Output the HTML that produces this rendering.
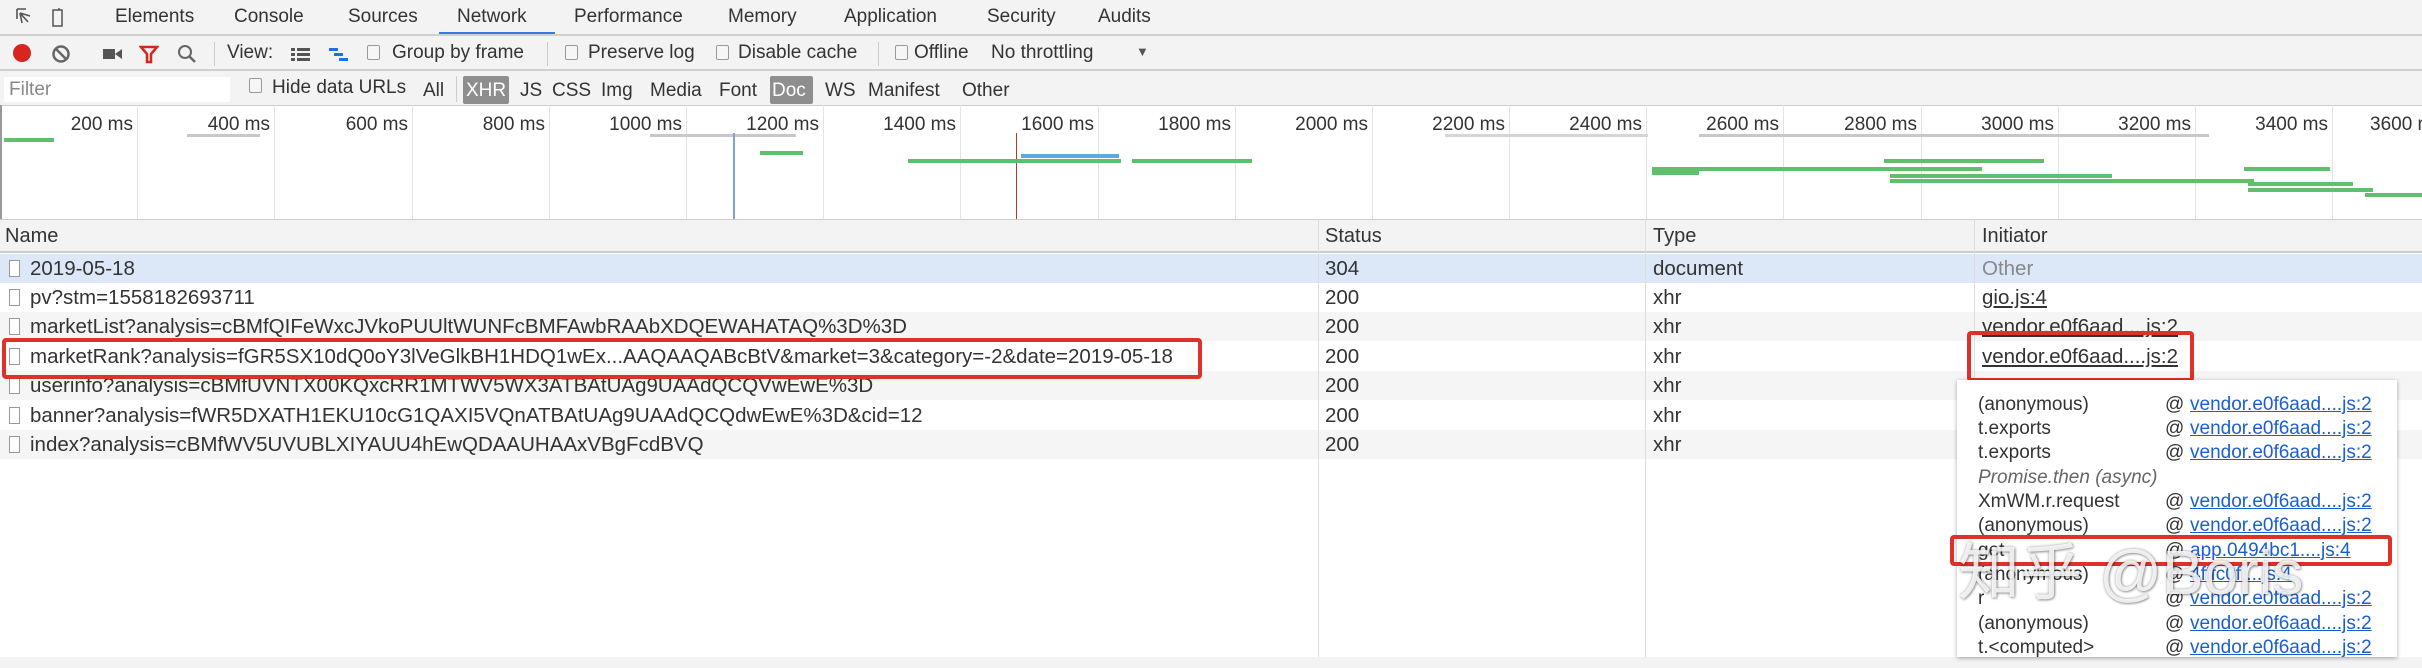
<!DOCTYPE html>
<html><head><meta charset="utf-8">
<style>
*{margin:0;padding:0;box-sizing:border-box}
body{width:2422px;height:668px;overflow:hidden;background:#f3f3f3;font-family:"Liberation Sans",sans-serif;color:#333;position:relative}
.a{position:absolute;white-space:nowrap}
.t{font-size:19px;top:6px;color:#333}
.tb{font-size:19px;color:#333}
.hl{position:absolute;left:0;width:2422px;height:2px;background:#d0d0d0}
.cb{position:absolute;width:13px;height:15px;border:1px solid #999;border-radius:2px;background:#f6f6f6}
.sep{position:absolute;width:1px;background:#ccc}
.g{position:absolute;height:4px;background:#5fbf6a}
.gr{position:absolute;height:4px;background:#c8c8c8}
.vl{position:absolute;top:105px;height:114px;width:1px;background:#e3e3e3}
.ml{position:absolute;top:114px;font-size:19px;color:#333;text-align:right;width:110px}
.row{position:absolute;left:0;width:2422px;height:29px;font-size:20.5px;line-height:29px}
.row span{position:absolute;white-space:nowrap}
.ic{display:inline-block;width:11px;height:17px;border:1px solid #999;background:#fff;vertical-align:-2px;margin-left:4px;margin-right:10px}
.pop{position:absolute;left:1957px;top:380px;width:440px;height:277px;background:#fff;box-shadow:0 1px 4px rgba(0,0,0,.35);font-size:19px}
.pl{position:absolute;left:21px;white-space:nowrap;color:#333}
.pa{position:absolute;left:208px;color:#333}
.pk{position:absolute;left:233px;color:#1a5fd0;text-decoration:underline;white-space:nowrap}
</style></head><body>
<div class="a" style="left:0;top:0;width:2422px;height:34px;background:#f3f3f3"></div>
<svg class="a" style="left:15px;top:7px" width="60" height="22"><path d="M2 2h9M2 2v10M5 6l8 9M5 6l2 10M5 6l10 3" stroke="#555" stroke-width="1.6" fill="none"/><rect x="38" y="3" width="9" height="16" stroke="#555" stroke-width="1.5" fill="none"/><path d="M44 1v2" stroke="#555" stroke-width="1.5"/></svg>
<div class="a t" style="left:115px">Elements</div>
<div class="a t" style="left:234px">Console</div>
<div class="a t" style="left:348px">Sources</div>
<div class="a t" style="left:457px">Network</div>
<div class="a t" style="left:574px">Performance</div>
<div class="a t" style="left:728px">Memory</div>
<div class="a t" style="left:844px">Application</div>
<div class="a t" style="left:987px">Security</div>
<div class="a t" style="left:1098px">Audits</div>
<div class="a" style="left:439px;top:32px;width:116px;height:3px;background:#3b78e7"></div>
<div class="hl" style="top:34px"></div>
<div class="a" style="left:13px;top:44px;width:18px;height:18px;border-radius:50%;background:#d7261f"></div>
<svg class="a" style="left:51px;top:44px" width="20" height="20"><circle cx="10" cy="10" r="7.5" stroke="#666" stroke-width="2.5" fill="none"/><path d="M5 5l10 10" stroke="#666" stroke-width="2.5"/></svg>
<svg class="a" style="left:102px;top:46px" width="22" height="16"><rect x="1" y="3" width="12" height="10" fill="#555"/><path d="M13 8l7-5v10z" fill="#555"/></svg>
<svg class="a" style="left:139px;top:44px" width="20" height="20"><path d="M2 3h16l-6 7v8h-4v-8z" stroke="#d7261f" stroke-width="2.5" fill="none"/></svg>
<svg class="a" style="left:177px;top:44px" width="20" height="20"><circle cx="8" cy="8" r="6" stroke="#666" stroke-width="2" fill="none"/><path d="M12 12l6 6" stroke="#666" stroke-width="2.5"/></svg>
<div class="sep" style="left:214px;top:42px;height:24px"></div>
<div class="a tb" style="left:227px;top:42px">View:</div>
<svg class="a" style="left:290px;top:46px" width="22" height="16"><rect x="1" y="2" width="4" height="3" fill="#555"/><rect x="7" y="2" width="13" height="3" fill="#555"/><rect x="1" y="7" width="4" height="3" fill="#555"/><rect x="7" y="7" width="13" height="3" fill="#555"/><rect x="1" y="12" width="4" height="3" fill="#555"/><rect x="7" y="12" width="13" height="3" fill="#555"/></svg>
<svg class="a" style="left:328px;top:46px" width="22" height="16"><rect x="1" y="2" width="9" height="3" fill="#1a73e8"/><rect x="6" y="7" width="9" height="3" fill="#1a73e8"/><rect x="11" y="12" width="9" height="3" fill="#1a73e8"/></svg>
<div class="cb" style="left:367px;top:45px"></div>
<div class="a tb" style="left:392px;top:42px">Group by frame</div>
<div class="sep" style="left:547px;top:42px;height:24px"></div>
<div class="cb" style="left:565px;top:45px"></div>
<div class="a tb" style="left:588px;top:42px">Preserve log</div>
<div class="cb" style="left:716px;top:45px"></div>
<div class="a tb" style="left:738px;top:42px">Disable cache</div>
<div class="sep" style="left:878px;top:42px;height:24px"></div>
<div class="cb" style="left:895px;top:45px"></div>
<div class="a tb" style="left:914px;top:42px">Offline</div>
<div class="a tb" style="left:991px;top:42px">No throttling</div>
<div class="a" style="left:1136px;top:44px;font-size:13px;color:#555">▼</div>
<div class="hl" style="top:69px"></div>
<div class="a" style="left:4px;top:77px;width:226px;height:25px;background:#fff"></div>
<div class="a" style="left:9px;top:79px;font-size:19px;color:#888">Filter</div>
<div class="cb" style="left:249px;top:78px"></div>
<div class="a tb" style="left:272px;top:77px">Hide data URLs</div>
<div class="a tb" style="left:423px;top:80px">All</div>
<div class="sep" style="left:456px;top:76px;height:26px"></div>
<div class="a" style="left:463px;top:76px;width:46px;height:28px;background:#8e8e8e;border-radius:2px"></div>
<div class="a tb" style="left:466px;top:80px;color:#fff">XHR</div>
<div class="a tb" style="left:520px;top:80px">JS</div>
<div class="a tb" style="left:552px;top:80px">CSS</div>
<div class="a tb" style="left:601px;top:80px">Img</div>
<div class="a tb" style="left:650px;top:80px">Media</div>
<div class="a tb" style="left:719px;top:80px">Font</div>
<div class="a" style="left:770px;top:76px;width:43px;height:28px;background:#8e8e8e;border-radius:2px"></div>
<div class="a tb" style="left:772px;top:80px;color:#fff">Doc</div>
<div class="a tb" style="left:825px;top:80px">WS</div>
<div class="a tb" style="left:868px;top:80px">Manifest</div>
<div class="a tb" style="left:962px;top:80px">Other</div>
<div class="a" style="left:0;top:105px;width:2422px;height:114px;background:#fff;border-top:1px solid #ccc"></div>
<div class="a" style="left:0;top:105px;width:2px;height:114px;background:#999"></div>
<div class="vl" style="left:137px"></div><div class="vl" style="left:274px"></div><div class="vl" style="left:412px"></div><div class="vl" style="left:549px"></div><div class="vl" style="left:686px"></div><div class="vl" style="left:823px"></div><div class="vl" style="left:960px"></div><div class="vl" style="left:1098px"></div><div class="vl" style="left:1235px"></div><div class="vl" style="left:1372px"></div><div class="vl" style="left:1509px"></div><div class="vl" style="left:1646px"></div><div class="vl" style="left:1783px"></div><div class="vl" style="left:1921px"></div><div class="vl" style="left:2058px"></div><div class="vl" style="left:2195px"></div><div class="vl" style="left:2332px"></div>
<div class="ml" style="left:23px">200 ms</div><div class="ml" style="left:160px">400 ms</div><div class="ml" style="left:298px">600 ms</div><div class="ml" style="left:435px">800 ms</div><div class="ml" style="left:572px">1000 ms</div><div class="ml" style="left:709px">1200 ms</div><div class="ml" style="left:846px">1400 ms</div><div class="ml" style="left:984px">1600 ms</div><div class="ml" style="left:1121px">1800 ms</div><div class="ml" style="left:1258px">2000 ms</div><div class="ml" style="left:1395px">2200 ms</div><div class="ml" style="left:1532px">2400 ms</div><div class="ml" style="left:1669px">2600 ms</div><div class="ml" style="left:1807px">2800 ms</div><div class="ml" style="left:1944px">3000 ms</div><div class="ml" style="left:2081px">3200 ms</div><div class="ml" style="left:2218px">3400 ms</div>
<div class="a" style="left:2370px;top:114px;font-size:19px">3600 ms</div>
<div class="g" style="left:4px;top:138px;width:50px"></div>
<div class="gr" style="left:187px;top:134px;width:73px;height:3px"></div>
<div class="gr" style="left:650px;top:134px;width:146px;height:3px"></div>
<div class="gr" style="left:1445px;top:134px;width:203px;height:3px;background:#d5d5d5"></div>
<div class="gr" style="left:1699px;top:134px;width:510px;height:3px"></div>
<div class="a" style="left:733px;top:133px;width:2px;height:86px;background:#7da3d8"></div>
<div class="a" style="left:1016px;top:133px;width:1px;height:86px;background:#b03a2e"></div>
<div class="g" style="left:760px;top:151px;width:43px"></div>
<div class="g" style="left:908px;top:159px;width:213px"></div>
<div class="a" style="left:1021px;top:154px;width:98px;height:4px;background:#5fa8e0"></div>
<div class="g" style="left:1132px;top:159px;width:120px"></div>
<div class="g" style="left:1884px;top:159px;width:160px"></div>
<div class="g" style="left:1652px;top:167px;width:330px"></div>
<div class="g" style="left:1652px;top:171px;width:47px"></div>
<div class="g" style="left:2244px;top:167px;width:86px"></div>
<div class="g" style="left:1890px;top:174px;width:222px"></div>
<div class="g" style="left:1890px;top:179px;width:364px"></div>
<div class="g" style="left:2248px;top:182px;width:105px"></div>
<div class="g" style="left:2248px;top:188px;width:125px"></div>
<div class="g" style="left:2365px;top:193px;width:57px"></div>
<div class="a" style="left:0;top:219px;width:2422px;height:449px;background:#fff"></div>
<div class="a" style="left:0;top:219px;width:2422px;height:34px;background:#f3f3f3;border-top:1px solid #ccc;border-bottom:2px solid #ccc"></div>
<div class="a" style="left:5px;top:225px;font-size:20px">Name</div>
<div class="a" style="left:1325px;top:225px;font-size:20px">Status</div>
<div class="a" style="left:1653px;top:225px;font-size:20px">Type</div>
<div class="a" style="left:1982px;top:225px;font-size:20px">Initiator</div>
<div class="row" style="top:254px;background:#dce8f7"><span style="left:5px"><i class="ic"></i>2019-05-18</span><span style="left:1325px">304</span><span style="left:1653px">document</span><span style="left:1982px;color:#888">Other</span></div>
<div class="row" style="top:283px"><span style="left:5px"><i class="ic"></i>pv?stm=1558182693711</span><span style="left:1325px">200</span><span style="left:1653px">xhr</span><span style="left:1982px;text-decoration:underline">gio.js:4</span></div>
<div class="row" style="top:312px;background:#f5f5f5"><span style="left:5px"><i class="ic"></i>marketList?analysis=cBMfQIFeWxcJVkoPUUltWUNFcBMFAwbRAAbXDQEWAHATAQ%3D%3D</span><span style="left:1325px">200</span><span style="left:1653px">xhr</span><span style="left:1982px;text-decoration:underline">vendor.e0f6aad....js:2</span></div>
<div class="row" style="top:342px"><span style="left:5px"><i class="ic"></i>marketRank?analysis=fGR5SX10dQ0oY3lVeGlkBH1HDQ1wEx...AAQAAQABcBtV&amp;market=3&amp;category=-2&amp;date=2019-05-18</span><span style="left:1325px">200</span><span style="left:1653px">xhr</span><span style="left:1982px;text-decoration:underline">vendor.e0f6aad....js:2</span></div>
<div class="row" style="top:371px;background:#f5f5f5"><span style="left:5px"><i class="ic"></i>userinfo?analysis=cBMfUVNTX00KQxcRR1MTWV5WX3ATBAtUAg9UAAdQCQVwEwE%3D</span><span style="left:1325px">200</span><span style="left:1653px">xhr</span></div>
<div class="row" style="top:401px"><span style="left:5px"><i class="ic"></i>banner?analysis=fWR5DXATH1EKU10cG1QAXI5VQnATBAtUAg9UAAdQCQdwEwE%3D&amp;cid=12</span><span style="left:1325px">200</span><span style="left:1653px">xhr</span></div>
<div class="row" style="top:430px;background:#f5f5f5"><span style="left:5px"><i class="ic"></i>index?analysis=cBMfWV5UVUBLXIYAUU4hEwQDAAUHAAxVBgFcdBVQ</span><span style="left:1325px">200</span><span style="left:1653px">xhr</span></div>
<div class="a" style="left:1318px;top:219px;width:1px;height:449px;background:#ddd"></div>
<div class="a" style="left:1645px;top:219px;width:1px;height:449px;background:#ddd"></div>
<div class="a" style="left:1974px;top:219px;width:1px;height:449px;background:#ddd"></div>
<div class="a" style="left:0;top:657px;width:2422px;height:11px;background:#f3f3f3"></div>
<div class="a" style="left:2px;top:338px;width:1200px;height:41px;border:4px solid #e0302a;border-radius:4px"></div>
<div class="a" style="left:1967px;top:331px;width:227px;height:51px;border:4px solid #e0302a;border-radius:4px"></div>
<div class="pop">
<div class="pl" style="top:14px">(anonymous)</div><div class="pa" style="top:14px">@</div><div class="pk" style="top:14px">vendor.e0f6aad....js:2</div>
<div class="pl" style="top:38px">t.exports</div><div class="pa" style="top:38px">@</div><div class="pk" style="top:38px">vendor.e0f6aad....js:2</div>
<div class="pl" style="top:62px">t.exports</div><div class="pa" style="top:62px">@</div><div class="pk" style="top:62px">vendor.e0f6aad....js:2</div>
<div class="pl" style="top:87px;font-style:italic;color:#666">Promise.then (async)</div>
<div class="pl" style="top:111px">XmWM.r.request</div><div class="pa" style="top:111px">@</div><div class="pk" style="top:111px">vendor.e0f6aad....js:2</div>
<div class="pl" style="top:135px">(anonymous)</div><div class="pa" style="top:135px">@</div><div class="pk" style="top:135px">vendor.e0f6aad....js:2</div>
<div class="pl" style="top:160px">get</div><div class="pa" style="top:160px">@</div><div class="pk" style="top:160px">app.0494bc1....js:4</div>
<div class="pl" style="top:184px">(anonymous)</div><div class="pa" style="top:184px">@</div><div class="pk" style="top:184px">4fffc0f....js:4</div>
<div class="pl" style="top:208px">r</div><div class="pa" style="top:208px">@</div><div class="pk" style="top:208px">vendor.e0f6aad....js:2</div>
<div class="pl" style="top:233px">(anonymous)</div><div class="pa" style="top:233px">@</div><div class="pk" style="top:233px">vendor.e0f6aad....js:2</div>
<div class="pl" style="top:257px">t.&lt;computed&gt;</div><div class="pa" style="top:257px">@</div><div class="pk" style="top:257px">vendor.e0f6aad....js:2</div>
</div>
<div class="a" style="left:1950px;top:535px;width:442px;height:31px;border:4px solid #e0302a;border-radius:4px"></div>
<div class="a" style="left:1958px;top:522px;font-family:'Liberation Sans','Noto Sans CJK SC',sans-serif;font-size:62px;color:rgba(255,255,255,.85);text-shadow:0 0 3px rgba(0,0,0,.35),1px 1px 2px rgba(0,0,0,.3)">知乎 @Boris</div>
</body></html>
